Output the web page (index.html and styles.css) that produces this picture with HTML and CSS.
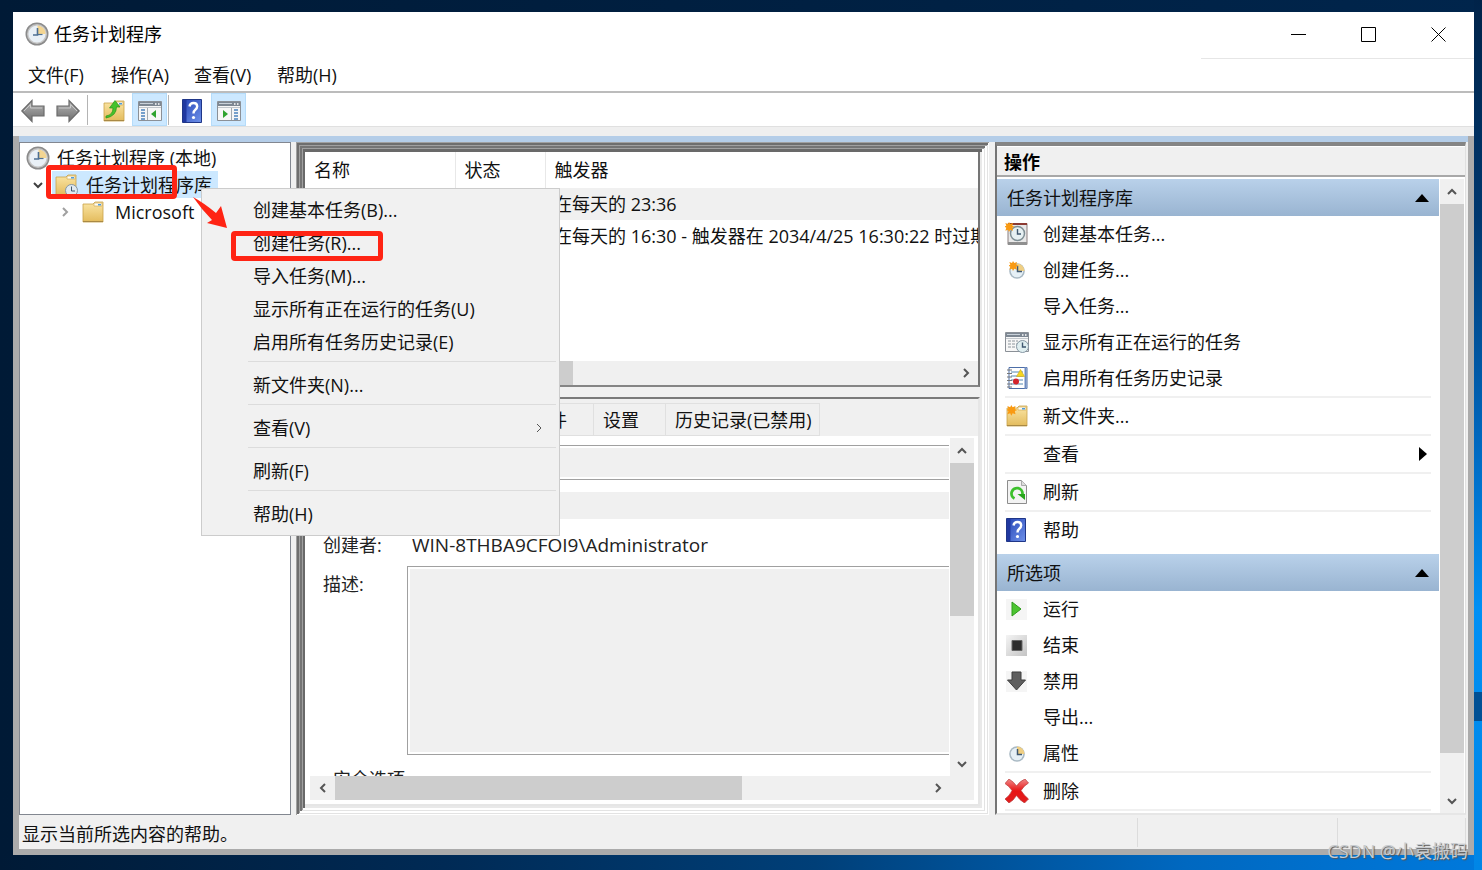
FILE: index.html
```html
<!DOCTYPE html>
<html lang="zh-CN">
<head>
  <meta charset="utf-8">
  <title>任务计划程序</title>
  <link rel="stylesheet" href="styles.css">
</head>
<body>

  <!-- Shared icons -->
  <svg class="defs" aria-hidden="true">
    <defs>
      <linearGradient id="gFolder" x1="0" y1="0" x2="0" y2="1">
        <stop offset="0" stop-color="#fbe6a6"/><stop offset="1" stop-color="#e3bb5c"/>
      </linearGradient>
      <linearGradient id="gGrey" x1="0" y1="0" x2="0" y2="1">
        <stop offset="0" stop-color="#b5b5b5"/><stop offset="1" stop-color="#6e6e6e"/>
      </linearGradient>
      <linearGradient id="gBlue" x1="0" y1="0" x2="1" y2="1">
        <stop offset="0" stop-color="#2443b4"/><stop offset="1" stop-color="#6f92ea"/>
      </linearGradient>
      <linearGradient id="gRed" x1="0" y1="0" x2="0" y2="1">
        <stop offset="0" stop-color="#f08a8a"/><stop offset=".5" stop-color="#e81414"/><stop offset="1" stop-color="#e02020"/>
      </linearGradient>
      <linearGradient id="gStop" x1="0" y1="0" x2="1" y2="1">
        <stop offset="0" stop-color="#f4f4f4"/><stop offset="1" stop-color="#c4c4c4"/>
      </linearGradient>
      <symbol id="clock" viewBox="0 0 24 24">
        <circle cx="12" cy="12" r="11.5" fill="#8b8b8b"/>
        <circle cx="12" cy="12" r="10" fill="#c4c4c4"/>
        <circle cx="12" cy="12" r="8.6" fill="#e9f0f6"/>
        <path d="M12.500 12V3.400A8.600 8.600 0 0 1 20.600 12z" fill="#f3d592"/>
        <path d="M12.500 6v7H8" fill="none" stroke="#4d6f93" stroke-width="1.600"/>
        <path d="M13 12.500h4.500" stroke="#4d6f93" stroke-width="1.200"/>
      </symbol>
      <symbol id="miniclock" viewBox="0 0 24 24">
        <circle cx="12" cy="13" r="7.800" fill="#a9b9c4"/>
        <circle cx="12" cy="13" r="6.300" fill="#e6f0f6"/>
        <path d="M12 13V5.500A7.500 7.500 0 0 1 19.500 13z" fill="#f0cf83"/>
        <path d="M12.500 8v5.500H17" fill="none" stroke="#3f5870" stroke-width="1.500"/>
      </symbol>
      <symbol id="folder" viewBox="0 0 24 24">
        <path d="M2 4h10l2-2h8v20H2z" fill="url(#gFolder)" stroke="#c9a24a" stroke-width=".8"/>
        <path d="M13 3h8v3h-8z" fill="#fffdf4" stroke="#c9a24a" stroke-width=".6"/>
        <path d="M17 4h3v1.500h-3z" fill="#4c9bd9"/>
        <path d="M2 21.500h20" stroke="#a98944"/>
      </symbol>
      <symbol id="star" viewBox="0 0 24 24">
        <path d="M6 0l2 3 4-1.500-1 4L14.500 7 11 8.500l1 4.500-4-1.500L6 15l-1.500-3.500L.5 13 2 8.500-1 7l3-1.500L.5 1.500 4.500 3z" fill="#f99a12"/>
      </symbol>
      <symbol id="window" viewBox="0 0 24 24">
        <path d="M.5 2.500h23v19H.5z" fill="#f7f7f7" stroke="#8b9097"/>
        <path d="M1 3h22v4H1z" fill="#7d8792"/>
        <path d="M2 4.500h13" stroke="#c9d1d9"/>
        <path d="M17 5h1.500M20 5h1.500" stroke="#fff" stroke-width="1.500"/>
        <path d="M1 8.500h22" stroke="#c2c7cc"/>
      </symbol>
      <symbol id="help" viewBox="0 0 24 24">
        <path d="M1.500 .5h19v23h-19z" fill="url(#gBlue)" stroke="#1f3688"/>
        <path d="M2 1h3.500v22H2z" fill="#2038a0"/>
        <path d="M8.500 7.500Q9 4 12.500 4t3.700 3.300q0 2-1.900 3.400-1.800 1.300-1.800 3.800" fill="none" stroke="#fff" stroke-width="2.400"/>
        <circle cx="12.500" cy="18.500" r="1.600" fill="#fff"/>
      </symbol>
      <symbol id="arrow" viewBox="0 0 24 24">
        <path d="M.8 12L11 1.500V7h12v10H11v5.500z" fill="url(#gGrey)" stroke="#6b6b6b" stroke-width="1.200"/>
        <path d="M3 12l6.500-6.500V9H21" fill="none" stroke="#c8c8c8"/>
      </symbol>
    </defs>
  </svg>

  <div class="window">
    <header class="titlebar">
      <svg class="icon"><use href="#clock"/></svg>
      <h1>任务计划程序</h1>
      <div class="controls">
        <button aria-label="最小化"><svg width="16" height="16"><path d="M0 8.500h15"/></svg></button>
        <button aria-label="最大化"><svg width="16" height="16"><path d="M.5 1.500h14v14H.5z"/></svg></button>
        <button aria-label="关闭"><svg width="16" height="16"><path d="M.5 1.500l14 14M14.500 1.500l-14 14"/></svg></button>
      </div>
    </header>

    <nav class="menubar">
      <button>文件(F)</button>
      <button>操作(A)</button>
      <button>查看(V)</button>
      <button>帮助(H)</button>
    </nav>

    <div class="toolbar">
      <button class="tool" aria-label="后退"><svg class="icon"><use href="#arrow"/></svg></button>
      <button class="tool" aria-label="前进"><svg class="icon flip"><use href="#arrow"/></svg></button>
      <span class="divider"></span>
      <button class="tool" aria-label="向上">
        <svg class="icon" viewBox="0 0 24 24"><use href="#folder"/><path d="M4 17q7-1 7-8H7.500L13 1.500 18 8h-3.500q0 9-10.500 11z" fill="#45c22c" stroke="#2b9419" stroke-width=".7"/></svg>
      </button>
      <button class="tool on" aria-label="显示/隐藏控制台树">
        <svg class="icon" viewBox="0 0 24 24"><use href="#window"/><path d="M3 11h4M3 14h4M3 17h4M3 20h4" stroke="#4d84bd" stroke-width="1.500"/><path d="M9.500 9v12" stroke="#a5abb0"/><path d="M18 11v8l-5-4z" fill="#2fa32f"/></svg>
      </button>
      <span class="divider"></span>
      <button class="tool" aria-label="帮助"><svg class="icon"><use href="#help"/></svg></button>
      <button class="tool on" aria-label="显示/隐藏操作窗格">
        <svg class="icon" viewBox="0 0 24 24"><use href="#window"/><path d="M17 11h4M17 14h4M17 17h4M17 20h4" stroke="#4d84bd" stroke-width="1.500"/><path d="M14.500 9v12" stroke="#a5abb0"/><path d="M6 11v8l5-4z" fill="#2fa32f"/></svg>
      </button>
    </div>

    <div class="frame">
      <main class="panes">

        <!-- Console tree -->
        <section class="tree">
          <div class="node"><svg class="icon"><use href="#clock"/></svg><span>任务计划程序 (本地)</span></div>
          <div class="node level1">
            <svg class="chev" viewBox="0 0 12 12"><path d="M2 4l4 4 4-4" stroke="#404040"/></svg>
            <span class="selected">
              <svg class="icon" viewBox="0 0 24 24"><use href="#folder"/><circle cx="17.500" cy="17.500" r="6" fill="#dfe9f0" stroke="#8596a3"/><path d="M17.500 13.500v4.500h3.500" fill="none" stroke="#3f5870"/></svg>
              <span>任务计划程序库</span>
            </span>
          </div>
          <div class="node level2">
            <svg class="chev" viewBox="0 0 12 12"><path d="M4 2l4 4-4 4" stroke="#a0a0a0"/></svg>
            <svg class="icon"><use href="#folder"/></svg><span>Microsoft</span>
          </div>
        </section>

        <!-- Task list and details -->
        <section class="center">
          <div class="tasks">
            <table>
              <thead>
                <tr><th class="col-name">名称</th><th class="col-state">状态</th><th>触发器</th></tr>
              </thead>
              <tbody>
                <tr class="current"><td></td><td></td><td>在每天的 23:36</td></tr>
                <tr><td></td><td></td><td>在每天的 16:30 - 触发器在 2034/4/25 16:30:22 时过期</td></tr>
              </tbody>
            </table>
            <div class="hscroll">
              <span class="sb"><svg class="chev" viewBox="0 0 12 12"><path d="M8 2L4 6l4 4"/></svg></span>
              <span class="track"><span class="thumb tasks-thumb"></span></span>
              <span class="sb"><svg class="chev" viewBox="0 0 12 12"><path d="M4 2l4 4-4 4"/></svg></span>
            </div>
          </div>

          <div class="details">
            <div class="tabs">
              <button class="tab active">常规</button>
              <button class="tab">触发器</button>
              <button class="tab">操作</button>
              <button class="tab">条件</button>
              <button class="tab">设置</button>
              <button class="tab">历史记录(已禁用)</button>
            </div>
            <div class="panel">
              <form class="general">
                <label for="taskName">名称:</label>
                <input type="text" id="taskName" class="boxed" readonly>
                <label for="taskPath">位置:</label>
                <input type="text" id="taskPath" class="shaded" readonly>
                <label for="taskAuthor" class="author">创建者:</label>
                <input type="text" id="taskAuthor" class="author" value="WIN-8THBA9CFOI9\Administrator" readonly>
                <label for="taskDesc" class="top">描述:</label>
                <textarea id="taskDesc" readonly></textarea>
                <div class="security">安全选项</div>
              </form>
              <div class="vscroll">
                <span class="sb"><svg class="chev" viewBox="0 0 12 12"><path d="M2 8l4-4 4 4"/></svg></span>
                <span class="track"><span class="thumb details-thumb"></span></span>
                <span class="sb"><svg class="chev" viewBox="0 0 12 12"><path d="M2 4l4 4 4-4"/></svg></span>
              </div>
              <div class="hscroll">
                <span class="sb"><svg class="chev" viewBox="0 0 12 12"><path d="M8 2L4 6l4 4"/></svg></span>
                <span class="track"><span class="thumb wide-thumb"></span></span>
                <span class="sb"><svg class="chev" viewBox="0 0 12 12"><path d="M4 2l4 4-4 4"/></svg></span>
              </div>
              <div class="corner"></div>
            </div>
          </div>
        </section>

        <!-- Actions -->
        <aside class="actions">
          <h2>操作</h2>
          <div class="action-body">
            <div class="action-list">
              <h3>任务计划程序库 <svg width="16" height="8"><path d="M1 8l7-8 7 8z"/></svg></h3>
              <button>
                <svg class="icon" viewBox="0 0 24 24"><path d="M3 1.500h19v21H3z" fill="#e8e8e8" stroke="#8a7e7e"/><path d="M3 1h19v2H3z" fill="#8c3b33"/><path d="M3 20h19v3H3z" fill="#8f8f8f"/><circle cx="12.500" cy="11.500" r="7" fill="#e6f0f2" stroke="#7f8f95" stroke-width="1.500"/><path d="M12.500 7v5H16" fill="none" stroke="#3f5870" stroke-width="1.400"/><use href="#star" width="16" height="16"/></svg>
                创建基本任务...
              </button>
              <button>
                <svg class="icon" viewBox="0 0 24 24"><use href="#miniclock"/><use href="#star" x="4" y="3" width="16" height="16"/></svg>
                创建任务...
              </button>
              <button><span class="icon"></span>导入任务...</button>
              <button>
                <svg class="icon" viewBox="0 0 24 24"><use href="#window"/><path d="M3 11h10M3 14h9M3 17h8" stroke="#8c959c" stroke-dasharray="3 1"/><circle cx="17.500" cy="16.500" r="6" fill="#dfeef0" stroke="#8596a3"/><path d="M17.500 12.500v4.500H21" fill="none" stroke="#3f5870" stroke-width="1.400"/></svg>
                显示所有正在运行的任务
              </button>
              <button>
                <svg class="icon" viewBox="0 0 24 24"><path d="M4 1.500h18v21H4z" fill="#fff" stroke="#4d6ea8"/><path d="M20.500 1v22" stroke="#6f8cc0" stroke-width="2"/><path d="M6 6h12M6 10h12M6 14h12M6 18h12" stroke="#8fb0cc" stroke-width="1.500"/><path d="M2 4h5M2 7.500h5M2 11h5M2 14.500h5M2 18h5M2 21h5" stroke="#777"/><path d="M15.500 3.500l4 7h-8z" fill="#f6d51f" stroke="#c9a81b" stroke-width=".6"/><circle cx="11" cy="15.500" r="3" fill="#d3232b"/></svg>
                启用所有任务历史记录
              </button>
              <hr>
              <button>
                <svg class="icon" viewBox="0 0 24 24"><use href="#folder"/><use href="#star" x="2" y="1" width="17" height="17"/></svg>
                新文件夹...
              </button>
              <hr>
              <button><span class="icon"></span>查看 <svg class="more" width="8" height="14"><path d="M0 0l8 7-8 7z"/></svg></button>
              <hr>
              <button>
                <svg class="icon" viewBox="0 0 24 24"><path d="M2.500 .5h14l5 5v18h-19z" fill="#f3f3f3" stroke="#8d8d8d"/><path d="M16.500 .5v5h5" fill="#ddd" stroke="#aaa"/><path d="M9.500 18.500A5.500 5.500 0 1 1 17.500 14" fill="none" stroke="#3cc02c" stroke-width="2.800"/><path d="M12.500 14h7.500v6z" fill="#27a51b"/></svg>
                刷新
              </button>
              <hr>
              <button><svg class="icon"><use href="#help"/></svg>帮助</button>

              <h3 class="second">所选项 <svg width="16" height="8"><path d="M1 8l7-8 7 8z"/></svg></h3>
              <button>
                <svg class="icon" viewBox="0 0 24 24"><path d="M1 2h21v21H1z" fill="#f5f5f5"/><path d="M7 5v14l9-7z" fill="#4cc431" stroke="#2f9c1c"/></svg>
                运行
              </button>
              <button>
                <svg class="icon" viewBox="0 0 24 24"><path d="M1 2h21v21H1z" fill="url(#gStop)"/><path d="M7 7.500h10v10H7z" fill="#2d2d2d" stroke="#666"/></svg>
                结束
              </button>
              <button>
                <svg class="icon" viewBox="0 0 24 24"><path d="M1 2h21v21H1z" fill="#f5f5f5"/><path d="M7 3h9v8h4.500L11.500 21 2.500 11H7z" fill="#606060" stroke="#3f3f3f"/></svg>
                禁用
              </button>
              <button><span class="icon"></span>导出...</button>
              <button><svg class="icon"><use href="#miniclock"/></svg>属性</button>
              <hr>
              <button>
                <svg class="icon" viewBox="0 0 24 24"><path d="M4 0Q9 3 11.500 7 15 2 20 0l3.500 4q-5 3-7.500 7.500 3 5 7.500 8.500l-4 4q-5-3-8-7.500-3 5-7.500 7.500L0 20q5-3.500 7-8.500Q4 7 0 4.500z" fill="url(#gRed)" stroke="#b93a3a" stroke-width=".7" stroke-linejoin="round"/></svg>
                删除
              </button>
              <hr>
            </div>
            <div class="vscroll">
              <span class="sb"><svg class="chev" viewBox="0 0 12 12"><path d="M2 8l4-4 4 4"/></svg></span>
              <span class="track"><span class="thumb actions-thumb"></span></span>
              <span class="sb"><svg class="chev" viewBox="0 0 12 12"><path d="M2 4l4 4 4-4"/></svg></span>
            </div>
          </div>
        </aside>
      </main>

      <footer class="statusbar">
        <span class="message">显示当前所选内容的帮助。</span>
        <span class="cell"></span>
        <span class="cell last"></span>
      </footer>
    </div>

    <!-- Context menu of the library node -->
    <div class="context-menu">
      <button>创建基本任务(B)...</button>
      <button>创建任务(R)...</button>
      <button>导入任务(M)...</button>
      <button>显示所有正在运行的任务(U)</button>
      <button>启用所有任务历史记录(E)</button>
      <hr>
      <button>新文件夹(N)...</button>
      <hr>
      <button>查看(V) <svg class="chev" viewBox="0 0 12 12"><path d="M4 2l4 4-4 4"/></svg></button>
      <hr>
      <button>刷新(F)</button>
      <hr>
      <button>帮助(H)</button>
    </div>

    <!-- Red step marks -->
    <div class="mark mark-library"></div>
    <div class="mark mark-create"></div>
    <svg class="mark-arrow" width="38" height="36" viewBox="0 0 38 36"><path d="M1 1Q12 7 24 17l5-7 6 22-20-5 5-3Q10 14 1 1z" fill="#ff2414"/></svg>
  </div>

  <div class="watermark">CSDN @小袁搬码</div>

</body>
</html>
```
FILE: styles.css
```css
* {
  box-sizing: border-box;
}

body {
  margin: 0;
  height: 100vh;
  padding: 12px 8px 15px 13px;
  position: relative;
  overflow: hidden;
  font-family: "Open Sans", "Noto Sans CJK SC", sans-serif;
  font-size: 18px;
  line-height: 24px;
  color: #111;
  background:
    linear-gradient(#005094, #005094) right 0 top 692px / 8px 29px no-repeat,
    linear-gradient(#002349, #00386f 25%, #0067bd 50%, #0090f4 70%, #0086e6) right / 8px 100% no-repeat,
    linear-gradient(90deg, #001a36, #002a55 30%, #003f78 55%, #0068c0 80%, #0079dc) bottom / 100% 15px no-repeat,
    linear-gradient(90deg, #001a36, #00254c);
}

h1, h2, h3 {
  margin: 0;
  font-size: 18px;
  font-weight: normal;
}

button, input, textarea {
  margin: 0;
  padding: 0;
  border: none;
  background: none;
  font: inherit;
  color: inherit;
}

button {
  display: flex;
  align-items: center;
  text-align: left;
  white-space: nowrap;
}

hr {
  margin: 0;
  border: none;
  height: 1px;
  background: #dcdcdc;
}

.defs {
  position: absolute;
  width: 0;
  height: 0;
}

.icon {
  width: 24px;
  height: 24px;
  flex: none;
}

.flip {
  transform: scaleX(-1);
}

.chev {
  width: 12px;
  height: 12px;
  flex: none;
  fill: none;
  stroke: #555;
  stroke-width: 2;
}

.window {
  position: relative;
  height: 100%;
  display: flex;
  flex-direction: column;
  background: #fff;
}

/* Title, menu and tool bars */
.titlebar {
  display: flex;
  align-items: center;
  height: 47px;
  padding: 0 0 3px 12px;
}

.titlebar h1 {
  margin-left: 5px;
  color: #000;
}

.controls {
  display: flex;
  align-self: flex-start;
  margin-left: auto;
  height: 47px;
  padding: 0 0 2px 63px;
  border-bottom: 1px solid #e6e6e6;
}

.controls button {
  width: 70px;
  justify-content: center;
}

.controls path {
  fill: none;
  stroke: #000;
}

.menubar {
  display: flex;
  height: 34px;
  padding: 0 15px;
  border-bottom: 2px solid #bcbcbc;
}

.menubar button {
  width: 83px;
}

.toolbar {
  display: flex;
  align-items: center;
  height: 34px;
  padding-left: 2px;
  border-bottom: 1px solid #e0e0e0;
}

.tool {
  width: 35px;
  height: 33px;
  padding-top: 2px;
  justify-content: center;
}

.tool.on {
  margin-left: 1px;
  background: #cce8ff;
  border: 1px solid #b5dcfa;
}

.divider {
  width: 1px;
  height: 30px;
  margin: 0 8px 0 2px;
  background: #b4b4b4;
}

.tool.on + .divider {
  margin: 0 6px 0 1px;
}

/* Frame and panes */
.frame {
  flex: 1;
  min-height: 0;
  display: flex;
  flex-direction: column;
  border-top: 9px solid #efefef;
}

.panes {
  flex: 1;
  min-height: 0;
  display: grid;
  grid-template-columns: 272px 1fr 471px;
  grid-template-rows: minmax(0, 1fr);
  column-gap: 5px;
  padding: 0 2px 1px 0;
  background: #f0f0f0;
  border-top: 6px solid #b4cde8;
  margin: 0 6px;
  box-shadow: -6px 0 0 #ababab, 6px 0 0 #ababab;
}

.tree {
  padding: 1px 0 0 6px;
  border: 1px solid #828790;
  background: #fff;
}

.node {
  display: flex;
  align-items: center;
  height: 27px;
  gap: 7px;
  white-space: nowrap;
}

.level1 {
  gap: 8px;
  padding-left: 6px;
}

.level2 {
  gap: 10px;
  padding-left: 33px;
}

.selected {
  display: flex;
  align-items: center;
  gap: 8px;
  height: 27px;
  padding: 0 6px 0 2px;
  background: #cce8ff;
}

/* Stacked sunken edges: dark on the top left, light on the bottom right */
.center {
  min-width: 0;
  display: grid;
  grid-template-rows: 235px minmax(0, 1fr);
  row-gap: 10px;
  margin-right: 1px;
  padding: 10px 9px 9px;
  box-shadow:
    inset 1px 1px #a0a0a0, inset -1px -1px #fff,
    inset 3px 3px #6e6e6e, inset -2px -2px #e3e3e3,
    inset 4px 4px #a0a0a0, inset -4px -4px #fff,
    inset 6px 6px #747474, inset -5px -5px #e3e3e3,
    inset 7px 7px #a0a0a0, inset -7px -7px #fff,
    inset 9px 10px #696969, inset -9px -9px #e9e9e9;
}

.tasks {
  min-width: 0;
  display: flex;
  flex-direction: column;
  justify-content: space-between;
  overflow: hidden;
  background: #fff;
  border-right: 2px solid #757575;
  border-bottom: 2px solid #858585;
}

.tasks table {
  width: 100%;
  table-layout: fixed;
  border-collapse: collapse;
}

.tasks th, .tasks td {
  height: 32px;
  padding: 0 0 0 9px;
  font-weight: normal;
  text-align: left;
  white-space: nowrap;
  overflow: hidden;
}

.tasks th {
  height: 36px;
  border-right: 1px solid #e8e8e8;
}

.tasks th:last-child {
  border-right: none;
}

.col-name {
  width: 150px;
}

.col-state {
  width: 90px;
}

.current {
  background: #f0f0f0;
}

/* Scroll bars */
.hscroll, .vscroll {
  display: flex;
  background: #f0f0f0;
}

.hscroll {
  height: 24px;
}

.vscroll {
  width: 24px;
  flex-direction: column;
}

.sb {
  flex: none;
  width: 25px;
  height: 24px;
  display: flex;
  align-items: center;
  justify-content: center;
}

.vscroll .sb {
  width: 24px;
  height: 25px;
}

.track {
  flex: 1;
}

.thumb {
  display: block;
  background: #cdcdcd;
}

.hscroll .thumb {
  height: 24px;
}

.tasks-thumb {
  width: 39%;
}

.wide-thumb {
  width: 69%;
}

.details-thumb {
  height: 53%;
}

.actions-thumb {
  height: 94%;
}

/* Task details */
.details {
  min-width: 0;
  min-height: 0;
  display: flex;
  flex-direction: column;
  border-top: 2px solid #7a7a7a;
  border-right: 2px solid #e6e6e6;
  border-bottom: 2px solid #e6e6e6;
  background: #fff;
}

.tabs {
  display: flex;
  flex: none;
  height: 37px;
  padding: 4px 0 0 4px;
  background: #f0f0f0;
}

.tab {
  min-width: 72px;
  padding: 0 7px 0 9px;
  border: 1px solid #e0e0e0;
  border-left: none;
}

.tab.active {
  min-width: 69px;
  background: #fff;
}

.panel {
  flex: 1;
  min-height: 0;
  display: grid;
  grid-template-columns: minmax(0, 1fr) 24px;
  grid-template-rows: minmax(0, 1fr) 24px;
  padding: 2px 4px 4px 5px;
}

.corner {
  background: #f0f0f0;
}

.general {
  min-width: 0;
  min-height: 0;
  overflow: hidden;
  display: grid;
  grid-template-columns: 84px 1fr;
  grid-template-rows: 43px 27px 39px 189px 40px;
  row-gap: 4px;
  align-items: center;
  margin-right: 1px;
  padding: 7px 0 0 13px;
  color: #222;
}

.general input {
  width: 100%;
  height: 100%;
  padding-left: 5px;
}

.general .boxed {
  align-self: start;
  height: 35px;
}

.general .boxed, .general textarea {
  border: 1px solid #a0a0a0;
  border-right: none;
  background: #f0f0f0;
  box-shadow: inset 2px 2px #fff, inset 0 -2px #fff;
}

.general .shaded {
  background: #f0f0f0;
}

.general .author {
  padding-top: 4px;
}

.general input.author {
  font-size: 19px;
}

.general textarea {
  width: 100%;
  height: 100%;
  resize: none;
}

.general .top {
  align-self: start;
  padding-top: 6px;
}

.security {
  grid-column: 1 / 3;
  padding-left: 10px;
}

/* Actions pane */
.actions {
  min-width: 0;
  display: flex;
  flex-direction: column;
  border-top: 4px solid #858585;
  border-left: 2px solid #757575;
  border-right: 1px solid #e0e0e0;
  border-bottom: 2px solid #e6e6e6;
  background: #fff;
}

.actions h2 {
  height: 31px;
  padding: 3px 0 0 7px;
  font-weight: bold;
  background: #f0f0f0;
  border-top: 1px solid #fff;
  border-bottom: 2px solid #a8a8a8;
  color: #000;
}

.action-body {
  flex: 1;
  min-height: 0;
  display: flex;
  gap: 1px;
  padding: 2px 1px 0 0;
}

.action-list {
  flex: 1;
  overflow: hidden;
}

.actions h3 {
  display: flex;
  align-items: center;
  justify-content: space-between;
  height: 37px;
  padding: 0 9px 0 10px;
  background: linear-gradient(#b9d1ea, #99b4d1);
}

.actions h3.second {
  margin-top: 6px;
}

.action-list button {
  width: 100%;
  height: 36px;
  padding-left: 8px;
  gap: 14px;
}

.action-list hr {
  height: 2px;
  margin: 0 8px;
  background: #f0f0f0;
}

.more {
  margin: 0 12px 0 auto;
}

/* Status bar */
.statusbar {
  flex: none;
  display: flex;
  height: 39px;
  border: 6px solid #ababab;
  border-top: none;
  background: #f0f0f0;
}

.message {
  flex: 1;
  padding: 6px 3px 0;
}

.cell {
  width: 200px;
  margin: 2px 0;
  border-left: 1px solid #dcdcdc;
}

.cell.last {
  width: 129px;
  margin-right: 2px;
  border-right: 1px solid #dcdcdc;
}

/* Context menu, over the panes */
.context-menu {
  position: absolute;
  left: 188px;
  top: 176px;
  width: 359px;
  padding: 4px 3px 5px;
  border: 1px solid #ccc;
  background: #f1f1f1;
}

.context-menu button {
  width: 100%;
  height: 33px;
  padding: 0 11px 0 48px;
  justify-content: space-between;
}

.context-menu hr {
  margin: 3px 0 6px 43px;
}

.context-menu .chev {
  stroke-width: 1;
}

/* Red marks */
.mark {
  position: absolute;
  border: 5px solid #ff2414;
  border-radius: 4px;
}

.mark-library {
  left: 33px;
  top: 153px;
  width: 131px;
  height: 34px;
}

.mark-create {
  left: 218px;
  top: 219px;
  width: 152px;
  height: 30px;
}

.mark-arrow {
  position: absolute;
  left: 179px;
  top: 184px;
}

.watermark {
  position: absolute;
  right: 14px;
  bottom: 7px;
  color: #c8ccd0;
  text-shadow: 1px 1px 1px #555;
}
```
